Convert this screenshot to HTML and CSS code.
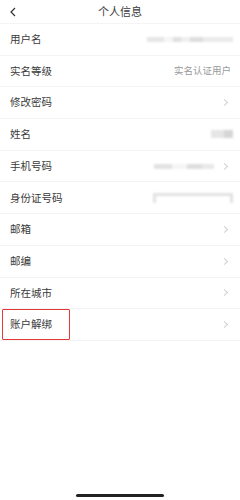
FILE: index.html
```html
<!DOCTYPE html>
<html lang="zh">
<head>
<meta charset="utf-8">
<link rel="stylesheet" href="styles.css">
</head>
<body>
<div class="page">
  <header class="nav">
    <svg class="back" width="8" height="10" viewBox="0 0 8 10"><path d="M6 1 L2 5 L6 9" fill="none" stroke="#333" stroke-width="1.2"/></svg>
    <div class="title">个人信息</div>
  </header>
  <ul class="list">
    <li class="row"><span class="label">用户名</span><span class="blur b-user"></span></li>
    <li class="row"><span class="label">实名等级</span><span class="value">实名认证用户</span></li>
    <li class="row"><span class="label">修改密码</span><span class="chev"></span></li>
    <li class="row"><span class="label">姓名</span><span class="blur b-name"></span></li>
    <li class="row"><span class="label">手机号码</span><span class="blur b-phone"></span><span class="chev"></span></li>
    <li class="row"><span class="label">身份证号码</span><span class="idbar"></span></li>
    <li class="row"><span class="label">邮箱</span><span class="chev"></span></li>
    <li class="row"><span class="label">邮编</span><span class="chev"></span></li>
    <li class="row"><span class="label">所在城市</span><span class="chev"></span></li>
    <li class="row mark"><span class="label">账户解绑</span><span class="chev"></span><span class="redbox"></span></li>
  </ul>
  <div class="home"></div>
</div>
</body>
</html>
```
FILE: styles.css
```css
* { box-sizing: border-box; margin: 0; padding: 0; }
body { margin: 0; background: #fff; font-family: "Noto Sans CJK SC", "Noto Sans", sans-serif; color: #333; }
.page { width: 240px; height: 500px; display: flex; flex-direction: column; }
.nav { height: 24px; border-bottom: 1px solid #f4f4f4; position: relative; display: flex; align-items: center; justify-content: center; }
.back { position: absolute; left: 9px; top: 7px; }
.title { font-size: 11px; color: #3a3a3a; line-height: 1; }
.list { list-style: none; }
.row { height: 31.7px; border-bottom: 1px solid #f4f4f4; display: flex; align-items: center; padding: 0 13px 0 10px; position: relative; }
.label { font-size: 10.5px; color: #3a3a3a; flex: 1; line-height: 1; }
.value { font-size: 9.5px; color: #9a9a9a; line-height: 1; margin-right: -4px; }
.chev { width: 5px; height: 5px; border-top: 1px solid #d0d0d0; border-right: 1px solid #d0d0d0; transform: rotate(45deg); }
.blur { display: block; filter: blur(1.2px); }
.b-user { width: 86px; height: 5px; margin-right: -6px; background: linear-gradient(90deg, #e6e6e6 0 20%, #f5f5f5 20% 30%, #e0e0e0 30% 40%, #efefef 40% 50%, #dedede 50% 65%, #ebebeb 65% 100%); }
.b-name { width: 22px; height: 8px; margin-right: -6px; background: linear-gradient(90deg, #e6e6e6 0 60%, #d6d6d6 60% 100%); }
.b-phone { width: 60px; height: 5px; margin-right: 8px; background: linear-gradient(90deg, #e2e2e2 0 30%, #f5f5f5 30% 55%, #dedede 55% 80%, #e8e8e8 80% 100%); }
.idbar { width: 80px; height: 10px; margin-right: -6px; border: 3px solid #e2e2e2; border-bottom: 0; filter: blur(0.8px); }
.redbox { position: absolute; left: 2px; top: 0; width: 68px; height: 31px; border: 1px solid #e53935; border-radius: 1px; }
.home { margin-top: auto; margin-bottom: 3px; align-self: center; width: 88px; height: 3px; border-radius: 2px; background: #222; }
```
